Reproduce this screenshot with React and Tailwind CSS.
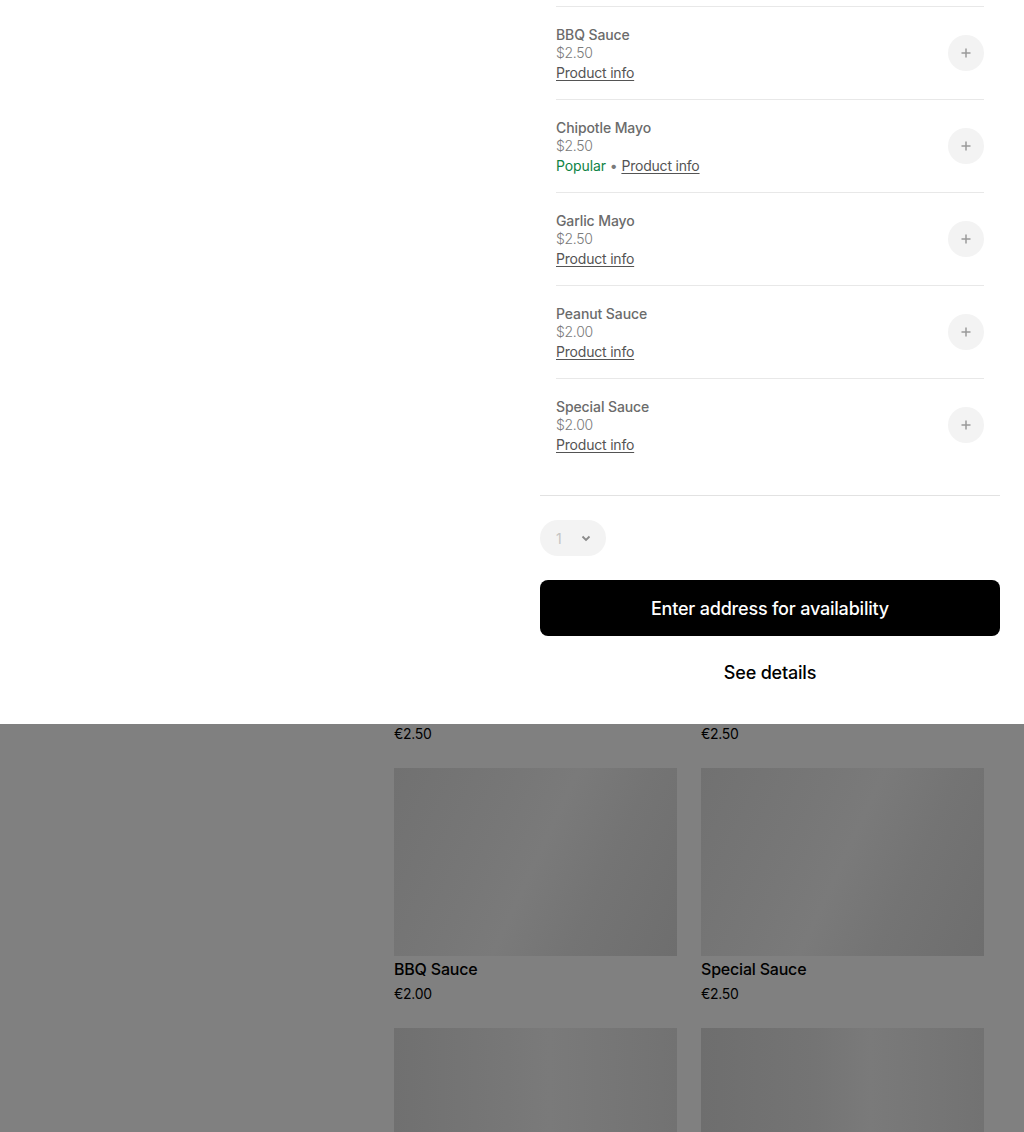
import React from "react";

const items = [
  { name: "BBQ Sauce", price: "$2.50", popular: false },
  { name: "Chipotle Mayo", price: "$2.50", popular: true },
  { name: "Garlic Mayo", price: "$2.50", popular: false },
  { name: "Peanut Sauce", price: "$2.00", popular: false },
  { name: "Special Sauce", price: "$2.00", popular: false },
];

function Plus() {
  return (
    <svg width="12" height="12" viewBox="0 0 12 12" fill="none">
      <path d="M6 1.5v9M1.5 6h9" stroke="#9a9a9a" strokeWidth="1.5" />
    </svg>
  );
}

function Card({ name, price }) {
  return (
    <div className="flex flex-col">
      <div className="h-[188px] bg-[linear-gradient(115deg,#717171_0%,#777777_35%,#7a7a7a_50%,#747474_70%,#6e6e6e_100%)]" />
      <div className="h-[24px] mt-[1px] text-[16px] leading-[24px] font-medium text-black tracking-[-0.2px]">{name}</div>
      <div className="h-[20px] mt-[3px] text-[14px] leading-[20px] text-black tracking-[-0.3px]">{price}</div>
    </div>
  );
}

export default function App() {
  return (
    <div className="w-[1024px] h-[1132px] overflow-hidden font-['Inter',sans-serif]">
      <div className="h-[724px] bg-white flex">
        <div className="w-[540px]" />
        <div className="w-[460px] flex flex-col">
          <div className="h-[6px]" />
          <div className="px-4">
            {items.map((it) => (
              <div key={it.name} className="border-t border-[#e8e8e8] py-4 flex items-center justify-between">
                <div className="flex flex-col text-[14px] leading-[20px] tracking-[-0.1px]">
                  <div className="h-5 font-medium text-[#6b6b6b] translate-y-[2px]">{it.name}</div>
                  <div className="h-5 text-[#7a7a7a] font-light tracking-[-0.3px]">{it.price}</div>
                  <div className="h-5 text-[#545454]">
                    {it.popular && (
                      <>
                        <span className="text-[#0e8345]">Popular</span>
                        <span className="text-[#7a7a7a]"> • </span>
                      </>
                    )}
                    <span className="underline underline-offset-2 tracking-[-0.2px]">Product info</span>
                  </div>
                </div>
                <div className="w-9 h-9 rounded-full bg-[#f3f3f3] flex items-center justify-center">
                  <Plus />
                </div>
              </div>
            ))}
          </div>
          <div className="h-[24px]" />
          <div className="border-t border-[#e2e2e2]" />
          <div className="pt-6 flex">
            <div className="h-9 w-[66px] rounded-full bg-[#f3f3f3] flex items-center pl-4 gap-[18px]">
              <span className="text-[14px] text-[#c4c4c4]">1</span>
              <svg width="12" height="12" viewBox="0 0 12 12" fill="none">
                <path d="M2.5 4.5L6 8l3.5-3.5" stroke="#8a8a8a" strokeWidth="1.8" />
              </svg>
            </div>
          </div>
          <div className="mt-6 h-14 bg-black rounded-lg flex items-center justify-center text-white text-[18px] font-medium tracking-[-0.2px]">
            Enter address for availability
          </div>
          <div className="mt-2 h-14 flex items-center justify-center text-black text-[18px] font-medium tracking-[-0.2px]">
            See details
          </div>
        </div>
      </div>
      <div className="h-[408px] bg-[#808080] flex">
        <div className="w-[394px]" />
        <div className="w-[590px] grid grid-cols-2 gap-x-6 content-start">
          <div className="h-[20px] text-[14px] leading-[20px] text-black tracking-[-0.3px]">€2.50</div>
          <div className="h-[20px] text-[14px] leading-[20px] text-black tracking-[-0.3px]">€2.50</div>
          <div className="col-span-2 h-6" />
          <Card name="BBQ Sauce" price="€2.00" />
          <Card name="Special Sauce" price="€2.50" />
          <div className="col-span-2 h-6" />
          <div className="h-[188px] bg-[linear-gradient(90deg,#707070_0%,#777777_40%,#7a7a7a_55%,#727272_100%)]" />
          <div className="h-[188px] bg-[linear-gradient(90deg,#6e6e6e_0%,#747474_40%,#7a7a7a_60%,#727272_100%)]" />
        </div>
      </div>
    </div>
  );
}
